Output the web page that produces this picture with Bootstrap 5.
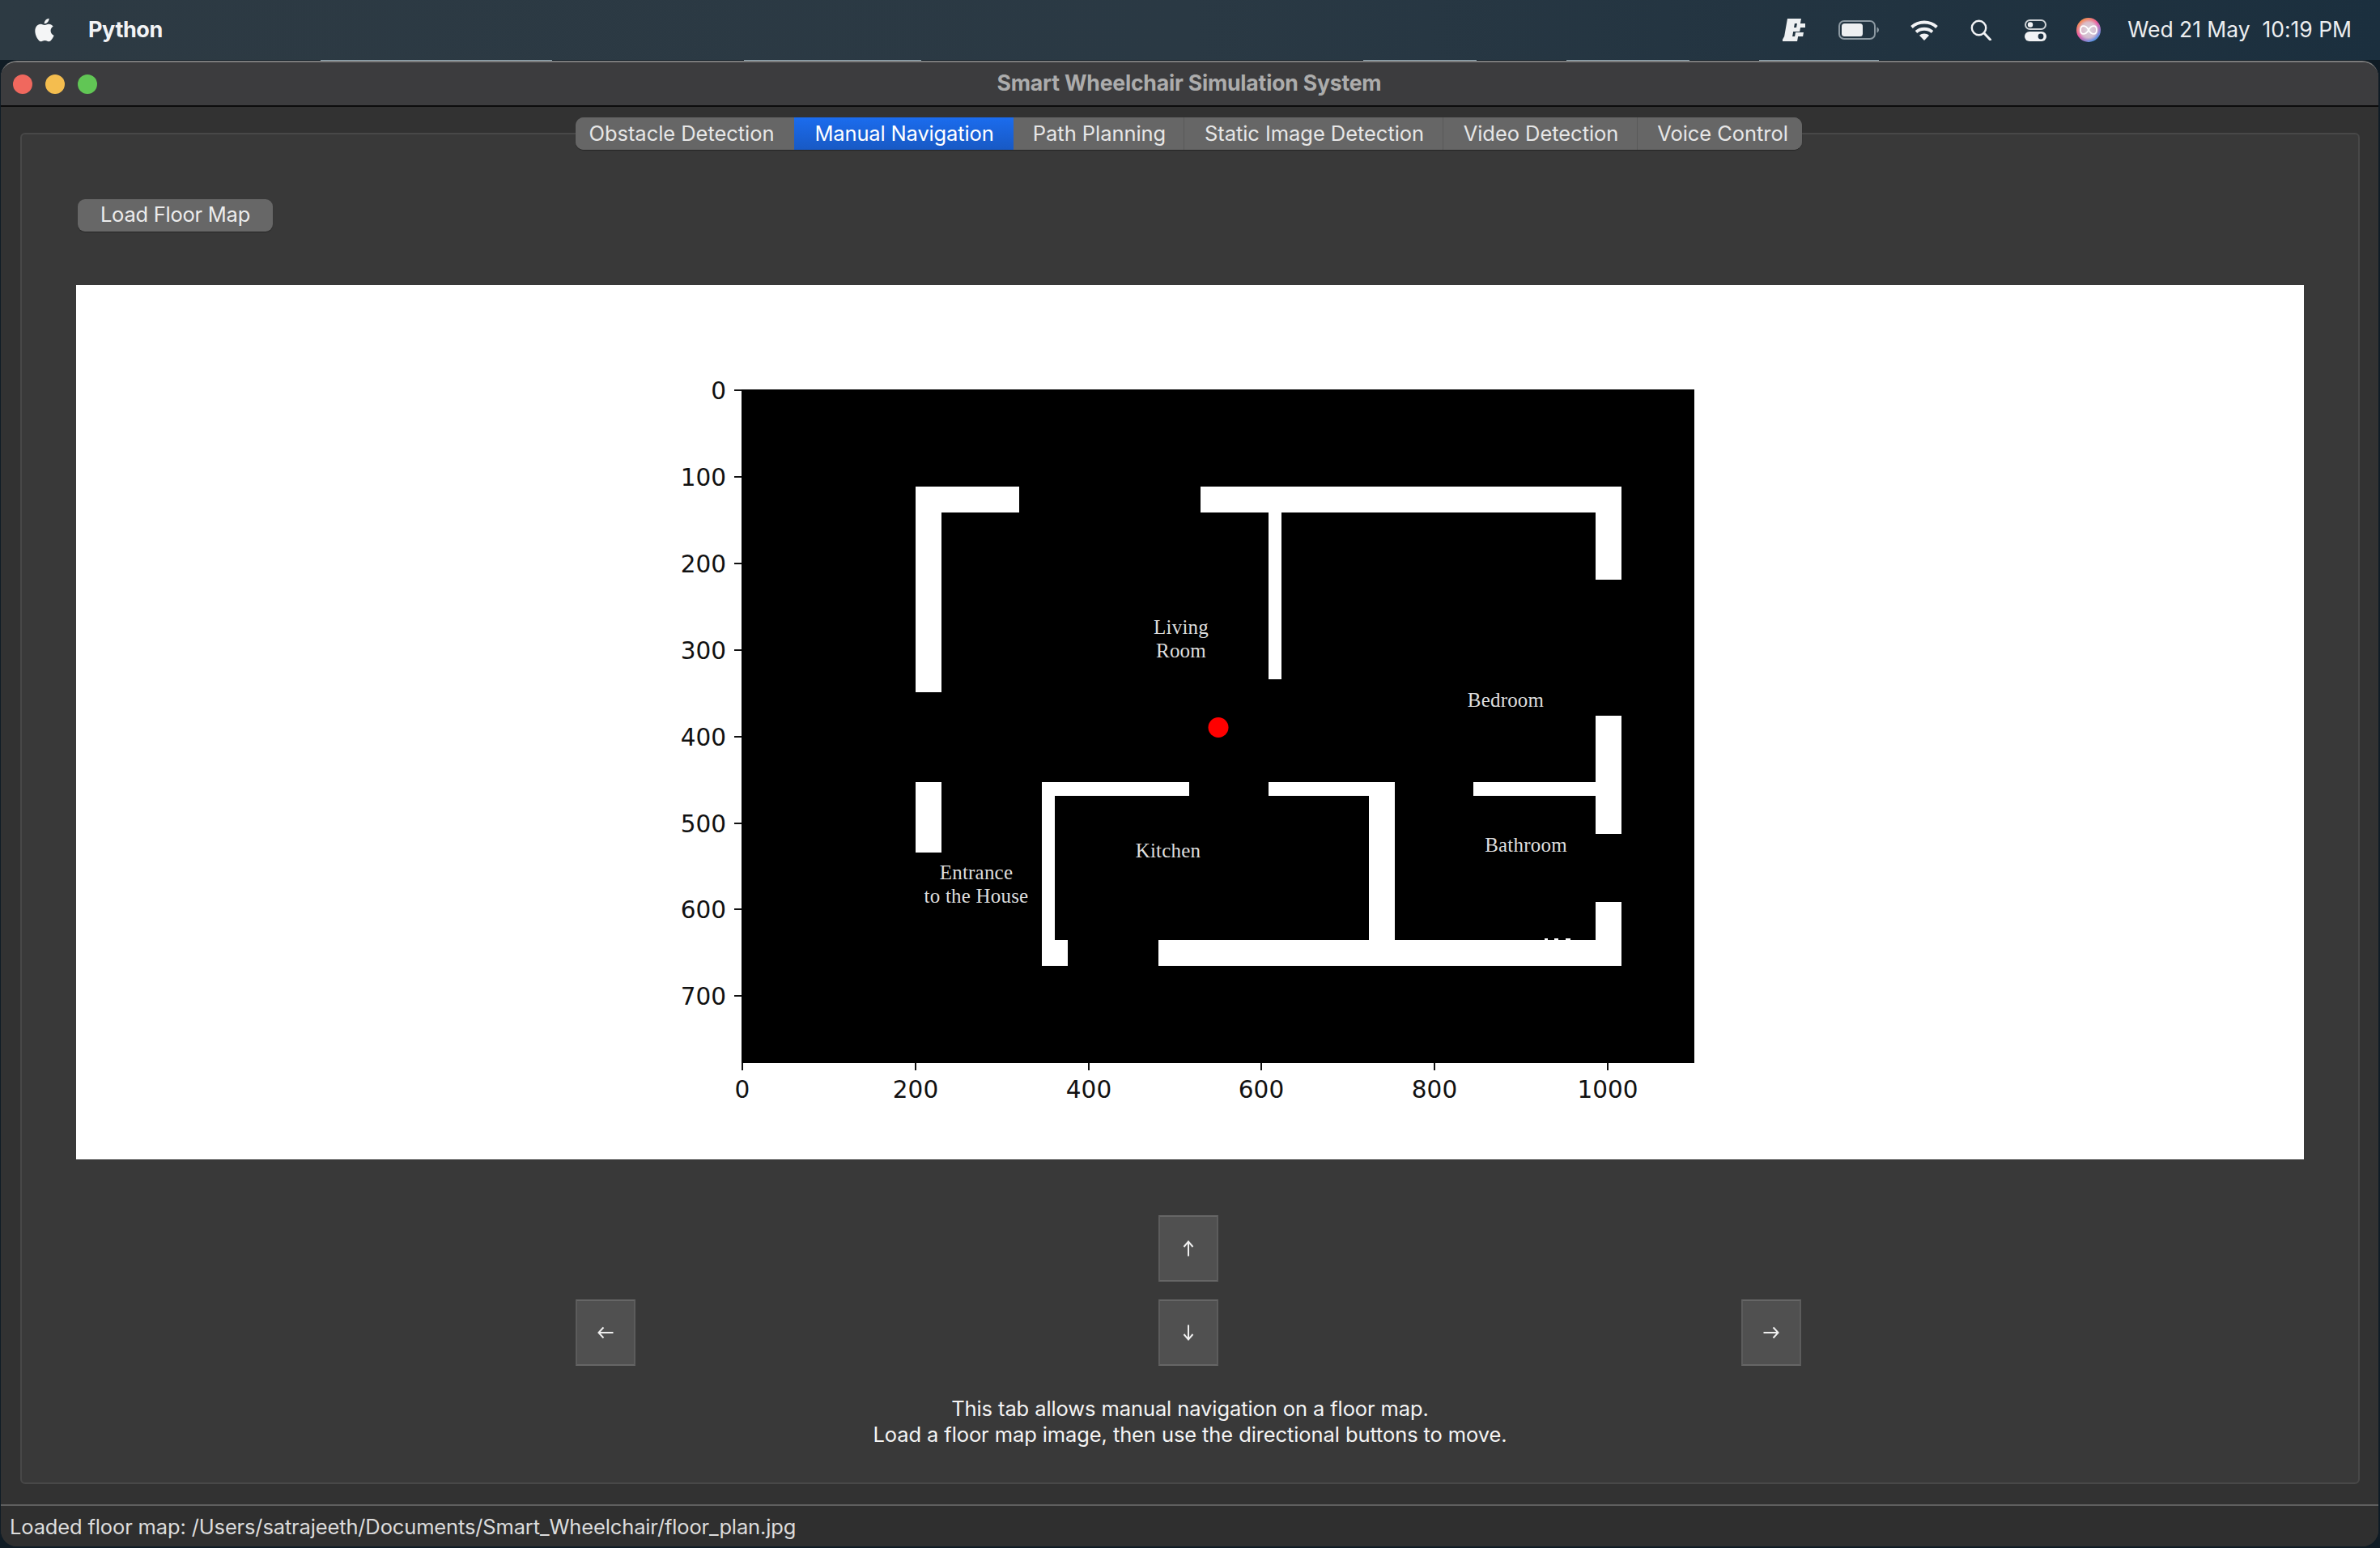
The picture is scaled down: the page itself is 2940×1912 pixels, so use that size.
<!DOCTYPE html>
<html lang="en">
<head>
<meta charset="utf-8">
<title>Smart Wheelchair Simulation System</title>
<link href="https://cdn.jsdelivr.net/npm/bootstrap@5.3.0/dist/css/bootstrap.min.css" rel="stylesheet">
<style>
html,body{margin:0;height:1912px;width:2940px;overflow:hidden}
body{font-family:Inter,"Liberation Sans",sans-serif;background:#101c25;display:flex;flex-direction:column;-webkit-font-smoothing:antialiased}
.menu-strip{height:74px;flex:none;padding:0 35px 0 41px;background:linear-gradient(90deg,#2d3a43 0%,#2a3944 50%,#1b2f3e 100%);color:#f2f3f5;font-size:26px}
.menu-app{font-weight:700;font-size:27px;margin-left:42px;letter-spacing:-.4px}
.menu-tail{margin-left:auto}
.menu-tail svg{display:block}
.gap-battery{margin-left:41px}.gap-wifi{margin-left:39px}.gap-search{margin-left:40px}.gap-ctrl{margin-left:41px}.gap-siri{margin-left:37px}
.clock{font-size:26.5px;letter-spacing:-.02px;white-space:pre;margin-left:33px;color:#eceef0}
.desk-strip{height:1px;flex:none;background:linear-gradient(90deg,#101c25 396px,#8fa3ad 396px,#8fa3ad 682px,#101c25 682px,#101c25 919px,#8fa3ad 919px,#8fa3ad 1138px,#101c25 1138px,#101c25 1684px,#8fa3ad 1684px,#8fa3ad 1824px,#101c25 1824px,#101c25 1935px,#8fa3ad 1935px,#8fa3ad 2087px,#101c25 2087px,#101c25 2173px,#8fa3ad 2173px,#8fa3ad 2321px,#101c25 2321px)}
.app-window{flex:1;margin:0 2px 2px 1px;background:#333;border-radius:20px;border-top:2px solid #7b7b7b;overflow:hidden;display:flex;flex-direction:column}
.title-strip{height:55px;flex:none;background:#3c3c3e;border-bottom:2px solid #0c0c0c;padding-left:15px}
.light{width:24px;height:24px;border-radius:50%;margin-right:16px}
.light-r{background:#f0685e}.light-y{background:#f4bd4f}.light-g{background:#61c655}
.title-text{flex:1;text-align:center;font-weight:700;font-size:26.6px;color:#acacac;margin-right:136px;padding-bottom:1px;letter-spacing:-.2px}
.work-area{flex:1;display:flex;flex-direction:column;padding:13px 23px 25px 24px;background:#323232}
.tab-row{height:40px;flex:none;margin-bottom:-21px;position:relative;z-index:2;padding-right:4px}
.tab-seg{display:flex;height:40px;border-radius:10px;background:#666;overflow:hidden;box-shadow:0 1px 1px rgba(0,0,0,.35)}
.seg-item{height:40px;line-height:38px;font-size:25.5px;color:#e6e6e6;padding:0;text-align:center;border:0;border-left:1px solid #595959;background:#666;letter-spacing:-.05px}
.seg-item:first-child{border-left:0}
.seg-item.on{background:linear-gradient(180deg,#1b6cee,#1859c4);color:#fff;border-left:0;letter-spacing:-.15px}
.seg-item.on + .seg-item{border-left:0}
.seg-1{width:270px;padding-right:7px}.seg-2{width:271px;padding-left:2px}.seg-3{width:210px;padding-left:3px}.seg-4{width:320px;padding-left:3px}.seg-5{width:240px;padding-left:3px}.seg-6{width:204px;padding-left:8px}
.pane-box{flex:1;background:#393939;border:2px solid #484848;border-radius:6px;padding:80px 67px 0;display:flex;flex-direction:column;min-height:0}
.load-btn{align-self:flex-start;margin-left:2px;width:241px;height:40px;padding:0 0 2px;background:#676767;border:0;border-radius:9px;color:#ececec;font-size:25.5px;letter-spacing:-.25px;box-shadow:0 1px 1px rgba(0,0,0,.3)}
.plot-panel{margin-top:66px;height:1080px;background:#fff;flex:none}
.plot-panel svg{display:block}
.tick-txt{font-family:"DejaVu Sans",sans-serif;font-size:29.5px;fill:#111}
.room-txt{font-family:"Liberation Serif",serif;font-size:25px;fill:#dedede;text-anchor:middle;letter-spacing:.2px}
.arrow-up-row{margin-top:69px;margin-right:4px}
.arrow-low-row{margin-top:22px;width:1514px;margin-left:617px}
.arrow-btn{width:74px;height:82px;padding:0;background:#505050;border:2px solid #5c5c5c;border-top-color:#666;border-bottom-color:#666;border-radius:0;display:flex;align-items:center;justify-content:center}
.help-text{margin:37px 0 0;text-align:center;font-size:25.5px;line-height:32px;color:#f4f4f4;letter-spacing:-.1px}
.status-strip{height:52px;flex:none;background:#2f2f2f;border-top:2px solid #5f5f5f;padding:0 11px;font-size:25.5px;color:#dcdcdc;letter-spacing:-.145px;line-height:51px;white-space:nowrap}
</style>
</head>
<body>
<nav class="menu-strip d-flex align-items-center">
  <svg width="26" height="32" viewBox="0 0 26 32"><path fill="#f4f5f6" d="M21.600 17c0-3.600 3-5.300 3.100-5.400-1.700-2.500-4.300-2.800-5.200-2.900-2.200-.2-4.300 1.300-5.400 1.300-1.100 0-2.900-1.300-4.700-1.300-2.400 0-4.700 1.400-5.900 3.600-2.500 4.400-.6 10.900 1.800 14.400 1.200 1.700 2.600 3.700 4.500 3.600 1.800-.1 2.500-1.200 4.700-1.200 2.200 0 2.800 1.200 4.700 1.100 2 0 3.200-1.700 4.400-3.500 1.400-2 2-3.900 2-4-.1 0-3.900-1.500-4-5.700zM18 6.300c1-1.200 1.700-2.900 1.500-4.600-1.500.1-3.200 1-4.300 2.200-.9 1.100-1.700 2.800-1.500 4.400 1.700.1 3.300-.8 4.300-2z"/></svg>
  <span class="menu-app">Python</span>
  <div class="menu-tail d-flex align-items-center">
    <svg width="28" height="28" viewBox="0 0 28 28"><g fill="#eef0f2" transform="translate(4 0) skewX(-10)"><path d="M2 0h17v6H2zM2 6h10v5H2zM15 6h11v5H15zM2 11h18v5H2zM2 16h10v6H2zM15 17h10v5H15zM2 22h17v6H1c-.6 0-1-.4-1-1z"/></g></svg>
    <svg class="gap-battery" width="50" height="24" viewBox="0 0 50 24"><rect x="1" y="1" width="44" height="22" rx="6" fill="none" stroke="#8c99a2" stroke-width="2"/><rect x="4" y="4" width="26" height="16" rx="3.500" fill="#eef0f2"/><path d="M47.500 8.500c1.600.6 2.500 2 2.500 3.500s-.9 2.900-2.500 3.500z" fill="#8c99a2"/></svg>
    <svg class="gap-wifi" width="34" height="25" viewBox="0 0 34 25"><path fill="none" stroke="#f2f3f5" stroke-width="3.800" d="M1.500 8.500C10 .5 24 .5 32.500 8.500M7 14.500c5.500-5 14.500-5 20 0"/><path fill="#f2f3f5" d="M17 25l-6-6.200c3.200-3 8.800-3 12 0z"/></svg>
    <svg class="gap-search" width="26" height="26" viewBox="0 0 26 26"><circle cx="10.500" cy="10.500" r="8.700" fill="none" stroke="#f2f3f5" stroke-width="2.400"/><path d="M17 17l7.500 8" stroke="#f2f3f5" stroke-width="3" stroke-linecap="round"/></svg>
    <svg class="gap-ctrl" width="27" height="27" viewBox="0 0 27 27"><rect x="1" y="1" width="25" height="11" rx="5.500" fill="none" stroke="#cfd3d6" stroke-width="2"/><circle cx="7" cy="6.500" r="3.200" fill="#f2f3f5"/><rect x="0" y="15" width="27" height="12" rx="6" fill="#f2f3f5"/><circle cx="20" cy="21" r="3.400" fill="#1d3040"/></svg>
    <svg class="gap-siri" width="30" height="30" viewBox="0 0 30 30"><defs><linearGradient id="siriGrad" x1=".1" y1="0" x2=".8" y2="1"><stop offset="0" stop-color="#f5a23a"/><stop offset=".5" stop-color="#ec5ba8"/><stop offset="1" stop-color="#3fa4f3"/></linearGradient><radialGradient id="siriCore"><stop offset="0" stop-color="#d8d4dc"/><stop offset=".7" stop-color="#d8c4d0" stop-opacity=".9"/><stop offset="1" stop-color="#d8c4d0" stop-opacity="0"/></radialGradient></defs><circle cx="15" cy="15" r="15" fill="url(#siriGrad)"/><circle cx="15" cy="15" r="13.500" fill="url(#siriCore)"/><path d="M5 15c0-6.500 6.500-6.500 10 0s10 6.500 10 0-6.500-6.500-10 0-10 6.500-10 0z" fill="none" stroke="#fff" stroke-width="1.800"/></svg>
    <span class="clock">Wed 21 May  10:19 PM</span>
  </div>
</nav>
<div class="desk-strip"></div>

<main class="app-window">
  <header class="title-strip d-flex align-items-center">
    <span class="light light-r"></span><span class="light light-y"></span><span class="light light-g"></span>
    <span class="title-text">Smart Wheelchair Simulation System</span>
  </header>
  <section class="work-area">
    <div class="tab-row d-flex justify-content-center">
      <div class="tab-seg" role="tablist">
        <button class="seg-item seg-1">Obstacle Detection</button>
        <button class="seg-item seg-2 on">Manual Navigation</button>
        <button class="seg-item seg-3">Path Planning</button>
        <button class="seg-item seg-4">Static Image Detection</button>
        <button class="seg-item seg-5">Video Detection</button>
        <button class="seg-item seg-6">Voice Control</button>
      </div>
    </div>
    <div class="pane-box">
      <button class="btn load-btn">Load Floor Map</button>
      <div class="plot-panel">
        <svg width="2752" height="1080" viewBox="94 352 2752 1080">
          <rect x="916" y="481" width="1177" height="832" fill="#000"/>
          <g fill="#fff">
            <rect x="1131" y="601" width="128" height="32"/><rect x="1131" y="601" width="32" height="254"/>
            <rect x="1483" y="601" width="520" height="32"/><rect x="1971" y="601" width="32" height="115"/>
            <rect x="1567" y="633" width="16" height="206"/>
            <rect x="1971" y="884" width="32" height="146"/>
            <rect x="1131" y="966" width="32" height="87"/>
            <rect x="1287" y="966" width="182" height="17"/><rect x="1287" y="966" width="16" height="227"/><rect x="1287" y="1161" width="32" height="32"/>
            <rect x="1567" y="966" width="156" height="17"/><rect x="1691" y="966" width="32" height="227"/>
            <rect x="1431" y="1161" width="572" height="32"/>
            <rect x="1820" y="966" width="151" height="17"/>
            <rect x="1971" y="1114" width="32" height="79"/>
            <rect x="1908" y="1159" width="4" height="2"/><rect x="1920" y="1159" width="5" height="2"/><rect x="1934" y="1159" width="6" height="2"/>
          </g>
          <circle cx="1505" cy="898.500" r="12.500" fill="#f00"/>
          <text class="room-txt" x="1459" y="783">Living</text>
          <text class="room-txt" x="1459" y="812">Room</text>
          <text class="room-txt" x="1860" y="873">Bedroom</text>
          <text class="room-txt" x="1443" y="1059">Kitchen</text>
          <text class="room-txt" x="1885" y="1052">Bathroom</text>
          <text class="room-txt" x="1206" y="1086">Entrance</text>
          <text class="room-txt" x="1206" y="1115">to the House</text>
          <g stroke="#111" stroke-width="2">
            <path d="M907 482h9M907 589h9M907 696h9M907 803h9M907 910h9M907 1017h9M907 1123h9M907 1230h9"/>
            <path d="M917 1313v9M1131 1313v9M1345 1313v9M1558 1313v9M1772 1313v9M1986 1313v9"/>
          </g>
          <g class="tick-txt" text-anchor="end">
            <text x="897" y="493">0</text><text x="897" y="600">100</text><text x="897" y="707">200</text><text x="897" y="814">300</text><text x="897" y="921">400</text><text x="897" y="1028">500</text><text x="897" y="1134">600</text><text x="897" y="1241">700</text>
          </g>
          <g class="tick-txt" text-anchor="middle">
            <text x="917" y="1356">0</text><text x="1131" y="1356">200</text><text x="1345" y="1356">400</text><text x="1558" y="1356">600</text><text x="1772" y="1356">800</text><text x="1986" y="1356">1000</text>
          </g>
        </svg>
      </div>
      <div class="arrow-up-row d-flex justify-content-center">
        <button class="btn arrow-btn" aria-label="Up"><svg width="18" height="20" viewBox="0 0 18 20"><path d="M9 19.500V1.500M3.500 8 9 1.500 14.500 8" fill="none" stroke="#efefef" stroke-width="2"/></svg></button>
      </div>
      <div class="arrow-low-row d-flex justify-content-between">
        <button class="btn arrow-btn" aria-label="Left"><svg width="20" height="18" viewBox="0 0 20 18"><path d="M19.500 9H1.500M7.500 2.500 1.500 9l6 6.500" fill="none" stroke="#efefef" stroke-width="2"/></svg></button>
        <button class="btn arrow-btn" aria-label="Down"><svg width="18" height="20" viewBox="0 0 18 20"><path d="M9 .5v18M3.500 12 9 18.500 14.500 12" fill="none" stroke="#efefef" stroke-width="2"/></svg></button>
        <button class="btn arrow-btn" aria-label="Right"><svg width="20" height="18" viewBox="0 0 20 18"><path d="M.5 9h18M12.500 2.500l6 6.500-6 6.500" fill="none" stroke="#efefef" stroke-width="2"/></svg></button>
      </div>
      <p class="help-text">This tab allows manual navigation on a floor map.<br>Load a floor map image, then use the directional buttons to move.</p>
    </div>
  </section>
  <footer class="status-strip">Loaded floor map: /Users/satrajeeth/Documents/Smart_Wheelchair/floor_plan.jpg</footer>
</main>
</body>
</html>
